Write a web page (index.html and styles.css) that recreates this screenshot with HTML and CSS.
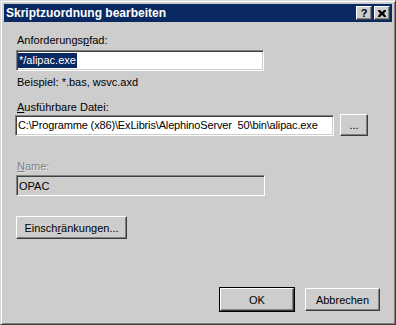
FILE: index.html
```html
<!DOCTYPE html>
<html lang="de">
<head>
    <meta charset="UTF-8">
    <title>Skriptzuordnung bearbeiten</title>
    <link rel="stylesheet" href="styles.css">
</head>
<body>
    <div class="window">
        <div class="titlebar">
            <span class="title">Skriptzuordnung bearbeiten</span>
            <div class="caption-buttons">
                <span class="cap-btn help">?</span>
                <span class="cap-btn close">
                    <svg width="8" height="7" viewBox="0 0 8 7">
                        <path d="M0 0h2l2 2 2-2h2v1l-2 2.5 2 2.5v1h-2l-2-2-2 2h-2v-1l2-2.5-2-2.5z" fill="#000"/>
                    </svg>
                </span>
            </div>
        </div>

        <div class="content">
            <div class="label">Anforderungs<u>p</u>fad:</div>
            <div class="edit path-edit"><span class="selection">*/alipac.exe</span></div>
            <div class="hint">Beispiel: *.bas, wsvc.axd</div>

            <div class="label exe-label"><u>A</u>usführbare Datei:</div>
            <div class="file-row">
                <div class="edit file-edit">C:\Programme (x86)\ExLibris\AlephinoServer&nbsp; 50\bin\alipac.exe</div>
                <div class="button browse">...</div>
            </div>

            <div class="label disabled name-label"><u>N</u>ame:</div>
            <div class="edit readonly name-edit">OPAC</div>

            <div class="button restrictions">Einsch<u>r</u>änkungen...</div>

            <div class="actions">
                <div class="button default">OK</div>
                <div class="button">Abbrechen</div>
            </div>
        </div>
    </div>
</body>
</html>
```

FILE: styles.css
```css
/* Classic dialog look */
body {
    margin: 0;
    font-family: "Liberation Sans", Arial, sans-serif;
    font-size: 11px;
    color: #000;
    background: #cdcdcd;
}

.window {
    box-sizing: border-box;
    width: 396px;
    height: 325px;
    display: flex;
    flex-direction: column;
    background: #cdcdcd;
    border: 1px solid;
    border-color: #d8d8d8 #3c3c3c #3c3c3c #d8d8d8;
    box-shadow: inset 1px 1px #fff, inset -1px -1px #808080;
    padding: 3px 3px 2px 3px;
}

.titlebar {
    height: 18px;
    display: flex;
    align-items: center;
    justify-content: space-between;
    background: #0a2862;
    padding: 0 2px 0 2px;
}

.title {
    color: #fff;
    font-weight: bold;
    font-size: 12px;
}

.caption-buttons {
    display: flex;
    gap: 2px;
}

.cap-btn {
    box-sizing: border-box;
    width: 16px;
    height: 14px;
    display: flex;
    align-items: center;
    justify-content: center;
    background: #cdcdcd;
    border: 1px solid;
    border-color: #fff #3c3c3c #3c3c3c #fff;
    box-shadow: inset -1px -1px #808080;
    font-weight: bold;
    font-size: 11px;
    line-height: 1;
}

.content {
    flex: 1;
    display: flex;
    flex-direction: column;
    align-items: flex-start;
    padding: 12px 12px 11px 12px;
}

.label {
    line-height: 13px;
    padding-left: 1px;
}

.label.disabled {
    color: #808080;
    text-shadow: 1px 1px #e4e4e4;
}

.edit {
    box-sizing: border-box;
    height: 21px;
    display: flex;
    align-items: center;
    background: #fff;
    border: 1px solid;
    border-color: #808080 #fff #fff #808080;
    box-shadow: inset 1px 1px #404040, inset -1px -1px #cdcdcd;
    padding: 0 2px;
    white-space: nowrap;
    overflow: hidden;
}

.edit.readonly {
    background: #cdcdcd;
}

.path-edit {
    width: 248px;
    margin-top: 3px;
    padding-left: 1px;
}

.selection {
    background: #0a2862;
    color: #fff;
    line-height: 15px;
    padding: 0 1px;
}

.hint {
    line-height: 13px;
    margin-top: 5px;
    padding-left: 1px;
}

.exe-label {
    margin-top: 12px;
}

.file-row {
    display: flex;
    align-items: center;
    gap: 6px;
    margin-left: -1px;
}

.file-edit {
    width: 319px;
    letter-spacing: -0.15px;
}

.button {
    box-sizing: border-box;
    height: 23px;
    display: flex;
    align-items: center;
    justify-content: center;
    background: #cdcdcd;
    border: 1px solid;
    border-color: #fff #3c3c3c #3c3c3c #fff;
    box-shadow: inset -1px -1px #808080;
}

.browse {
    width: 28px;
    height: 22px;
}

.name-label {
    margin-top: 24px;
}

.name-edit {
    width: 249px;
    margin-top: 2px;
}

.restrictions {
    width: 111px;
    margin-top: 20px;
}

.actions {
    margin-top: auto;
    align-self: flex-end;
    display: flex;
    gap: 11px;
}

.actions .button {
    width: 75px;
}

.actions .button.default {
    width: 74px;
    outline: 1px solid #000;
}
```
